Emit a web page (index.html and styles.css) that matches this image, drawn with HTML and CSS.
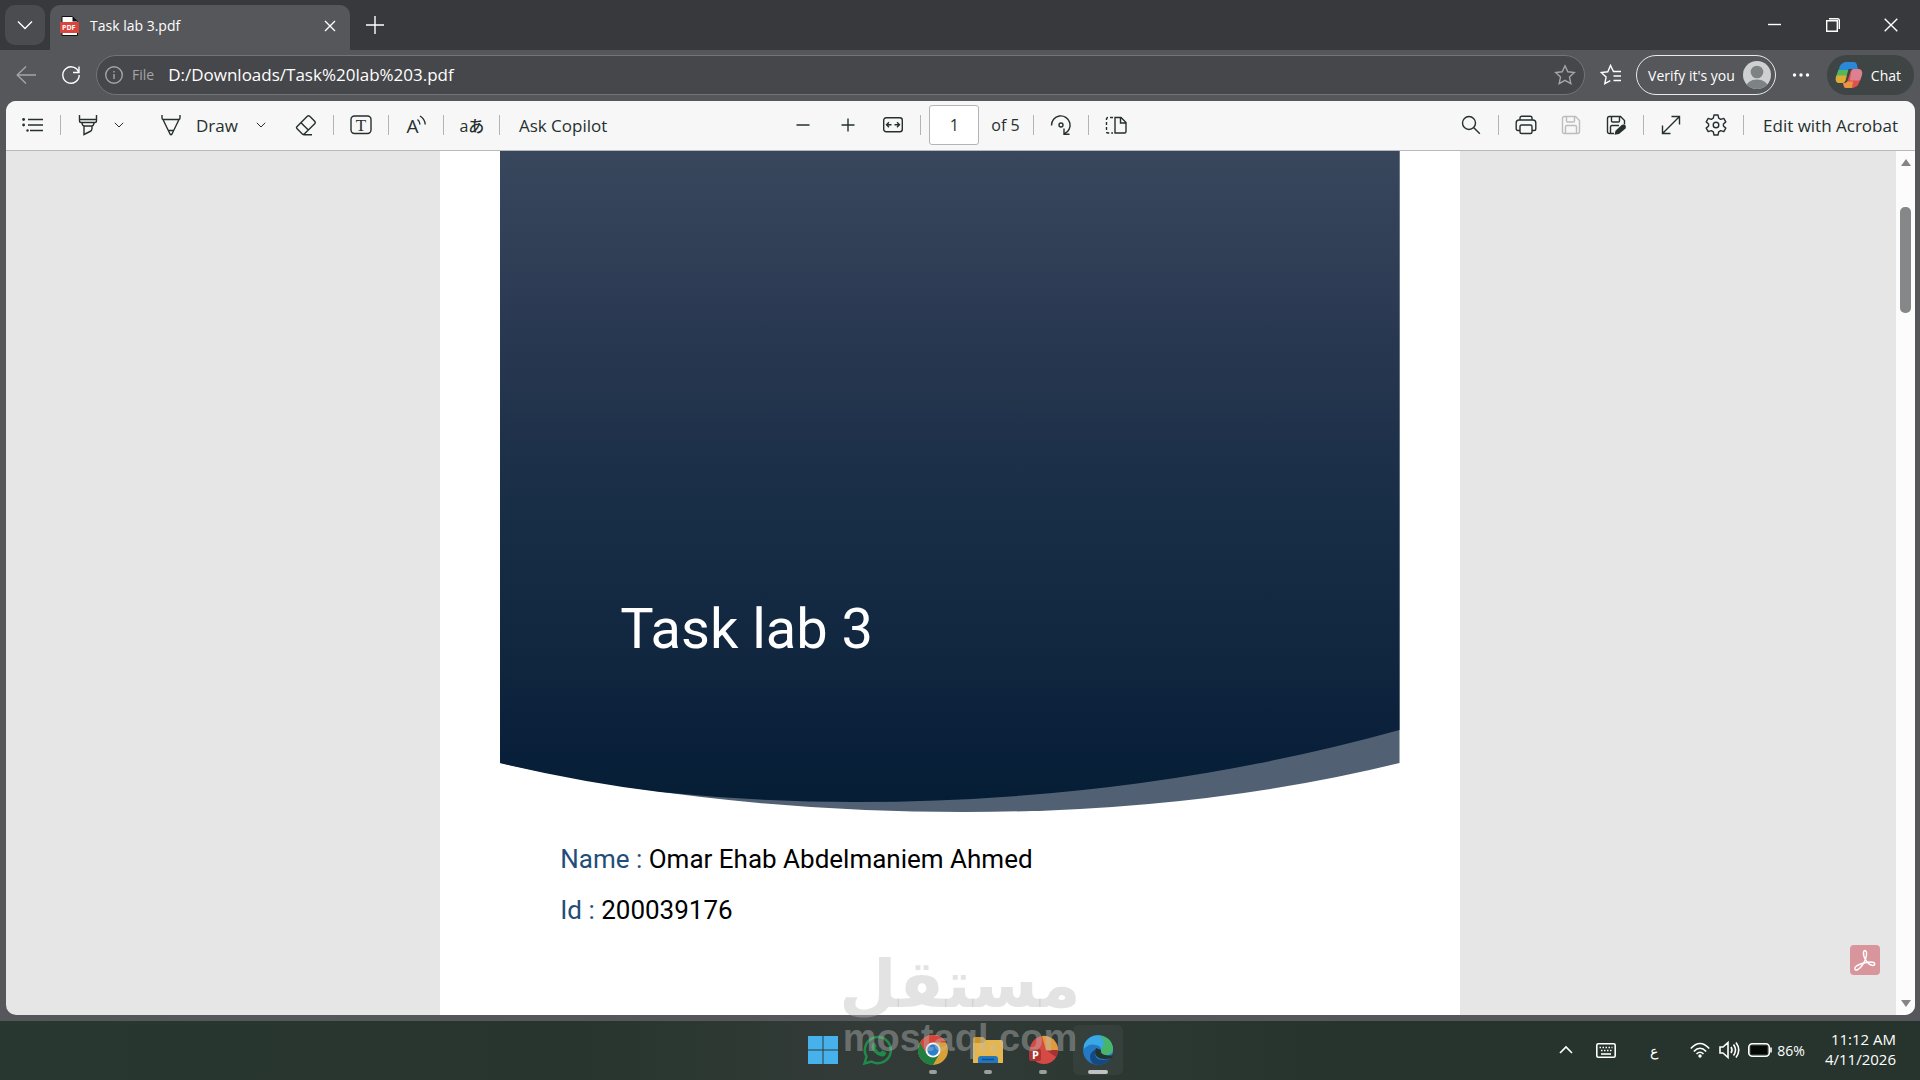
FILE: index.html
```html
<!DOCTYPE html>
<html lang="en">
<head>
    <meta charset="UTF-8">
    <meta name="viewport" content="width=device-width, initial-scale=1.0">
    <title>Task lab 3.pdf</title>
    <link rel="stylesheet" href="styles.css">
</head>
<body>
    <div class="browser">
        <header class="tab-strip">
            <button class="tab-search" aria-label="Search tabs">
                <svg width="16" height="16" viewBox="0 0 16 16"><path d="M1 4.500l7 7 7-7"/></svg>
            </button>
            <div class="tab">
                <svg class="tab-icon" width="20" height="20" viewBox="0 0 20 20">
                    <path d="M2 .5h10.500l5 5v14h-15.500z" fill="#fff" stroke="#111" stroke-width="1"/>
                    <path d="M12.500.5v5h5z" fill="#111" stroke="none"/>
                    <rect x="0" y="6" width="19" height="11" fill="#d9453d" stroke="none"/>
                    <text x="2" y="14" class="pdf-text">PDF</text>
                </svg>
                <span class="tab-title">Task lab 3.pdf</span>
                <button class="tab-close" aria-label="Close tab">
                    <svg width="12" height="12" viewBox="0 0 12 12"><path d="M1 1l10 10M11 1L1 11"/></svg>
                </button>
            </div>
            <button class="new-tab" aria-label="New tab">
                <svg width="20" height="20" viewBox="0 0 20 20"><path d="M10 1v18M1 10h18"/></svg>
            </button>
            <div class="window-controls">
                <button aria-label="Minimize"><svg width="14" height="14" viewBox="0 0 14 14"><path d="M0 6.500h13"/></svg></button>
                <button aria-label="Restore"><svg width="14" height="14" viewBox="0 0 14 14"><path d="M.7 2.700h10.600v10.600H.7zM3 .7h8.500q1.800 0 1.800 1.800V11"/></svg></button>
                <button aria-label="Close"><svg width="14" height="14" viewBox="0 0 14 14"><path d="M.7.7l12.600 12.600M13.300.7L.7 13.300"/></svg></button>
            </div>
        </header>

        <nav class="address-row">
            <button class="nav-btn disabled" aria-label="Back">
                <svg width="20" height="20" viewBox="0 0 20 20"><path d="M10 1.500L1.200 10l8.800 8.500M1.200 10H20"/></svg>
            </button>
            <button class="nav-btn" aria-label="Refresh">
                <svg width="20" height="20" viewBox="0 0 20 20"><path d="M17.800 7.500A8.200 8.200 0 1 0 18.200 10M18 1.500v6h-6"/></svg>
            </button>
            <div class="omnibox">
                <svg class="muted" width="18" height="18" viewBox="0 0 18 18"><circle cx="9" cy="9" r="8.300"/><path d="M9 8v5M9 5v1.500"/></svg>
                <label class="scheme" for="url">File</label>
                <input type="text" id="url" class="url" value="D:/Downloads/Task%20lab%203.pdf">
                <button class="star muted" aria-label="Add to favorites">
                    <svg width="22" height="22" viewBox="0 0 22 22"><path d="M11 1.800l2.800 6 6.500.8-4.800 4.500 1.300 6.500-5.800-3.200-5.800 3.200 1.300-6.500L1.700 8.600l6.500-.8z"/></svg>
                </button>
            </div>
            <button class="nav-btn favorites" aria-label="Favorites">
                <svg width="22" height="22" viewBox="0 0 22 22"><path d="M20 7.500h-6.500L10.500 1.500 7.800 7.800l-6.500.8 4.800 4.500-1.300 6.500 5.500-3M13.500 12H21M13.500 16.500H21M13.500 7.500H21"/></svg>
            </button>
            <button class="profile">
                Verify it's you
                <svg width="28" height="28" viewBox="0 0 28 28">
                    <defs><clipPath id="face"><circle cx="14" cy="14" r="14"/></clipPath></defs>
                    <g clip-path="url(#face)" stroke="none"><rect width="28" height="28" fill="#cfd0d1"/><circle cx="14" cy="11" r="6.300" fill="#7d8284"/><ellipse cx="14" cy="26" rx="11" ry="7.500" fill="#7d8284"/></g>
                </svg>
            </button>
            <button class="nav-btn more" aria-label="Settings and more">
                <svg width="18" height="6" viewBox="0 0 18 6"><g fill="#fff" stroke="none"><circle cx="2.500" cy="3" r="1.700"/><circle cx="9" cy="3" r="1.700"/><circle cx="15.500" cy="3" r="1.700"/></g></svg>
            </button>
            <button class="chat">
                <svg width="28" height="28" viewBox="0 0 28 28">
                    <g stroke="none">
                        <path d="M8 2q1-1 3-1h8q2 0 2.700 2l1.300 5h-6q-2 0-2.600 2L11 20q-.7 2-3 2H4Q0 21 1 16L4.500 6Q5.500 3 8 2z" fill="#2a88d8"/>
                        <path d="M3.500 9L.9 16.500Q0 21.500 4 22h4q2.300 0 3-2l2.800-11z" fill="#55b858"/>
                        <path d="M1.500 14.500L.9 16.500Q0 21.500 4 22h4q2.300 0 3-2l1.600-5.500z" fill="#dfaa36"/>
                        <path d="M20 26q-1 1-3 1h-6q-2 0-2.500-2L8 22q2.500-.3 3-2l3.500-10q.8-2 2.500-2h7q4 1 3 6l-3.500 9q-1 2.500-3.500 3z" fill="#e2504c"/>
                        <path d="M16 12q.6-4 3-4h5q4 1 3 6l-2 5.500H15z" fill="#dc8092"/>
                        <path d="M9 25l-.8-3q2 0 3-1.500h7L17 26.500q-1 .5-2 .5h-4q-1.500 0-2-2z" fill="#e89544"/>
                        <path d="M13.500 8h4.500q-1.700.5-2.300 2.300l-2.900 9q-.6 1.900-2 2.400H8.500q1.400-.5 2-2z" fill="#3f4444"/>
                    </g>
                </svg>
                Chat
            </button>
        </nav>

        <main class="viewer">
            <div class="toolbar">
                <div class="tools">
                    <button class="tool" aria-label="Contents">
                        <svg width="22" height="16" viewBox="0 0 22 16"><path d="M6 2.500h15M6 8h15M8 13.500h13"/><g fill="#25302f" stroke="none"><circle cx="1.600" cy="2.500" r="1.400"/><circle cx="1.600" cy="8" r="1.400"/><circle cx="5.500" cy="13.500" r="1.200"/></g></svg>
                    </button>
                    <span class="sep"></span>
                    <button class="tool" aria-label="Highlight">
                        <svg width="20" height="22" viewBox="0 0 20 22"><path d="M1.500 1v6q0 1.500 1.500 1.500h14q1.500 0 1.500-1.500V1M1.500 5.500h17M4 8.500q0 3 2 3.500v8.500l6-3q2-1 2-3V12q2-.5 2-3.500M6 12h8"/></svg>
                    </button>
                    <button class="drop" aria-label="Highlight colors"><svg width="10" height="6" viewBox="0 0 10 6"><path d="M.8.8L5 5 9.200.8"/></svg></button>
                    <button class="tool pen">
                        <svg width="20" height="22" viewBox="0 0 20 22"><path d="M1 1v3q0 1.500 1.500 1.500h15Q19 5.500 19 4V1M2 5.500L9 20q1 1.500 2 0l7-14.500M7.500 16.500h5"/></svg>
                        Draw
                    </button>
                    <button class="drop" aria-label="Draw options"><svg width="10" height="6" viewBox="0 0 10 6"><path d="M.8.8L5 5 9.200.8"/></svg></button>
                    <button class="tool eraser" aria-label="Erase">
                        <svg width="22" height="22" viewBox="0 0 22 22"><path d="M12.300 2.300q1.200-1.200 2.400 0l5 5q1.200 1.200 0 2.400L9.500 19.800q-1.200 1.200-2.400 0l-5-5q-1.200-1.200 0-2.400zM6 8.700l7.300 7.300M8.500 20.700H17"/></svg>
                    </button>
                    <span class="sep"></span>
                    <button class="tool" aria-label="Add text">
                        <svg width="22" height="20" viewBox="0 0 22 20"><rect x="1" y="1" width="20" height="17.500" rx="3.500"/><text x="11" y="15.500" class="serif-text">T</text></svg>
                    </button>
                    <span class="sep"></span>
                    <button class="tool" aria-label="Read aloud">
                        <svg width="22" height="22" viewBox="0 0 22 22"><text x="7.500" y="18.500" class="read-text">A</text><path d="M12.500 5.500q2.500 1.800 2.500 5M15 2q5 3 5.200 8.500"/></svg>
                    </button>
                    <span class="sep"></span>
                    <button class="tool translate" aria-label="Translate">aあ</button>
                    <span class="sep"></span>
                    <button class="text-btn ask">Ask Copilot</button>
                </div>

                <div class="tools center">
                    <button class="tool" aria-label="Zoom out"><svg width="14" height="14" viewBox="0 0 14 14"><path d="M.5 7h13"/></svg></button>
                    <button class="tool far" aria-label="Zoom in"><svg width="14" height="14" viewBox="0 0 14 14"><path d="M.5 7h13M7 .5v13"/></svg></button>
                    <button class="tool far" aria-label="Fit to width">
                        <svg width="20" height="16" viewBox="0 0 20 16"><rect x=".7" y=".7" width="18.600" height="14" rx="2.500"/><path d="M3.500 7.700h5M6 5.200L3.500 7.700 6 10.200M16.500 7.700h-5M14 5.200l2.500 2.500-2.500 2.500"/></svg>
                    </button>
                    <span class="sep"></span>
                    <input type="text" id="page-number" class="page-number" value="1">
                    <label for="page-number" class="page-count">of 5</label>
                    <span class="sep"></span>
                    <button class="tool" aria-label="Rotate">
                        <svg width="22" height="22" viewBox="0 0 22 22"><path d="M1.500 11.500a9.300 9.300 0 1 1 13 8.200M14 14.500v5.700h5.500"/><circle cx="11" cy="11" r="2"/></svg>
                    </button>
                    <span class="sep"></span>
                    <button class="tool" aria-label="Page view">
                        <svg width="22" height="18" viewBox="0 0 22 18"><path d="M10 1.500h6l5 5v9q0 1.500-1.500 1.500H10zM15.500 1.500V7H21"/><path d="M8 1.500H3Q1.500 1.500 1.500 3v12.500Q1.500 17 3 17h5" stroke-dasharray="3 2"/></svg>
                    </button>
                </div>

                <div class="tools right">
                    <button class="tool" aria-label="Find"><svg width="20" height="20" viewBox="0 0 20 20"><circle cx="8" cy="8" r="6.500"/><path d="M12.800 12.800l6 6"/></svg></button>
                    <span class="sep"></span>
                    <button class="tool" aria-label="Print">
                        <svg width="22" height="20" viewBox="0 0 22 20"><path d="M5 5V3q0-1.800 1.800-1.800h8.400Q17 1.200 17 3v2M5 15.500H3q-1.800 0-1.800-1.800V8Q1.200 5 4 5h14q2.800 0 2.800 3v5.700q0 1.800-1.800 1.800h-2"/><rect x="5" y="10" width="12" height="8.500" rx="1.500"/></svg>
                    </button>
                    <button class="tool far pale" aria-label="Save" disabled>
                        <svg width="20" height="20" viewBox="0 0 20 20"><path d="M3.500 1.500h11l4 4v11q0 2-2 2h-13q-2 0-2-2v-13q0-2 2-2zM5.500 1.500V6q0 1 1 1h6q1 0 1-1V1.500M4.500 18.500V12q0-1.500 1.500-1.500h8q1.500 0 1.500 1.500v6.500"/></svg>
                    </button>
                    <button class="tool far" aria-label="Save as">
                        <svg width="20" height="20" viewBox="0 0 20 20"><path d="M8 18.500H3.500q-2 0-2-2v-13q0-2 2-2h11l4 4v4M5.500 1.500V6q0 1 1 1h6q1 0 1-1V1.500M4.500 18.500V12q0-1.500 1.500-1.500h7"/><path d="M8.500 19.800l1-4 6.500-6q2-1 3.300.4t.2 3.200L13 19z" fill="#25302f" stroke="none"/></svg>
                    </button>
                    <span class="sep"></span>
                    <button class="tool" aria-label="Full screen"><svg width="20" height="20" viewBox="0 0 20 20"><path d="M1.500 18.500l17-17M10.500 1.500h8v8M1.500 10.500v8h8"/></svg></button>
                    <button class="tool far" aria-label="Settings">
                        <svg width="22" height="22" viewBox="0 0 22 22"><path d="M9 1h4l.7 3.200 2 1.200 3.100-1 2 3.500-2.400 2.100v2l2.400 2.100-2 3.500-3.100-1-2 1.200L13 21H9l-.7-3.200-2-1.200-3.100 1-2-3.500L3.600 12v-2L1.200 7.900l2-3.500 3.100 1 2-1.200z" stroke-linejoin="round"/><circle cx="11" cy="11" r="2.800"/></svg>
                    </button>
                    <span class="sep"></span>
                    <button class="text-btn">Edit with Acrobat</button>
                </div>
            </div>

            <div class="document">
                <div class="pages">
                    <article class="page">
                        <section class="cover">
                            <svg class="cover-art" viewBox="0 0 900 662" preserveAspectRatio="none">
                                <defs>
                                    <linearGradient id="navy" x1="0" y1="0" x2="0" y2="1">
                                        <stop offset="0" stop-color="#39475d"/>
                                        <stop offset=".3" stop-color="#283750"/>
                                        <stop offset=".55" stop-color="#182d46"/>
                                        <stop offset=".8" stop-color="#10253e"/>
                                        <stop offset=".9" stop-color="#0a203b"/>
                                        <stop offset="1" stop-color="#051e35"/>
                                    </linearGradient>
                                </defs>
                                <path d="M0 0H900V612Q700 661 465 661Q220 661 0 612z" fill="#516173"/>
                                <path d="M0 0H900V579Q640 651 355 651Q260 651 160 641Q80 631 0 612z" fill="url(#navy)"/>
                            </svg>
                            <h1>Task lab 3</h1>
                        </section>
                        <p><span class="field">Name :</span> Omar Ehab Abdelmaniem Ahmed</p>
                        <p><span class="field">Id :</span> 200039176</p>
                    </article>
                    <button class="acrobat" aria-label="Open in Acrobat">
                        <svg width="22" height="22" viewBox="0 0 22 22"><path d="M11 1.500q3 1 .5 8.500Q9 17 4 20.500 1 22 .8 19.500.8 17 8 14.500t12-1q2 2.500-1 3-4-.5-7-5T9.500 3Q10 1.500 11 1.500z"/></svg>
                    </button>
                </div>
                <div class="scrollbar">
                    <span class="arrow up"></span>
                    <span class="thumb"></span>
                    <span class="arrow down"></span>
                </div>
            </div>
        </main>
    </div>

    <footer class="taskbar">
        <div></div>
        <div class="apps">
            <button class="app" aria-label="Start">
                <svg width="30" height="30" viewBox="0 0 30 30"><g fill="#46b1ea"><path d="M0 1h14.500v13.500H0zM15.500 1H30v13.500H15.500zM0 15.500h14.500V29H0zM15.500 15.500H30V29H15.500z"/></g></svg>
            </button>
            <button class="app" aria-label="WhatsApp">
                <svg width="30" height="30" viewBox="0 0 30 30"><path d="M1.500 28.500l2-7A13 13 0 1 1 8.500 26.500z" fill="none" stroke="#208a4a" stroke-width="2.500"/><path d="M10 8q1-1 2 0l1.500 3q.3 1-.8 2 1.500 3 4.500 4.500l1.500-1.800q.6-.5 1.300 0l2.800 1.500q.8.600 0 2-1.500 2.800-5 2-7-2-9.300-8.700Q8 9.500 10 8z" fill="#208a4a"/></svg>
            </button>
            <button class="app running" aria-label="Chrome">
                <svg width="30" height="30" viewBox="0 0 30 30"><circle cx="15" cy="15" r="15" fill="#d9a035"/><path d="M2 7.500A15 15 0 0 1 28 7.500H15L8.500 19z" fill="#d6443c"/><path d="M2 7.500A15 15 0 0 0 15 30l6.500-11.200H8.500z" fill="#1f7e40"/><circle cx="15" cy="15" r="7.500" fill="#fff"/><circle cx="15" cy="15" r="5.700" fill="#2b7fcb"/></svg>
            </button>
            <button class="app running" aria-label="File Explorer">
                <svg width="30" height="30" viewBox="0 0 30 30"><path d="M0 4q0-2 2-2h8l3 3v6H0z" fill="#c9962e"/><path d="M0 8l10 0 3-3h15q2 0 2 2v21H0z" fill="#e5b64f"/><path d="M5 28v-4q0-3 3-3h14q3 0 3 3v4z" fill="#2277bf"/><path d="M9 24.500h12" stroke="#134f8c" stroke-width="1.500"/></svg>
            </button>
            <button class="app running" aria-label="PowerPoint">
                <svg width="30" height="30" viewBox="0 0 30 30"><circle cx="16" cy="15" r="14" fill="#d64a45"/><path d="M14 1a14 14 0 0 1 16 14H18z" fill="#e09a3c"/><path d="M18 15h12a14 14 0 0 1-2 7z" fill="#a63231"/><rect x="1" y="14" width="12" height="12" rx="2" fill="#a83532"/><text x="4" y="24" class="app-text">P</text></svg>
            </button>
            <button class="app running active" aria-label="Microsoft Edge">
                <svg width="30" height="30" viewBox="0 0 30 30"><circle cx="15" cy="15" r="15" fill="#2379c4"/><path d="M1 10A15 15 0 0 1 30 14q0 6-7 6-6 0-5-4 1-5-5-6Q6 8 1 14z" fill="#39a8e4"/><path d="M17 1q12 1 13 13 0 6-7 6-6 0-5-4 2-6 3-9z" fill="#47b56c"/><path d="M12 16q-1 9 8 9 4 0 8-2-5 7-13 7-8-1-8-8 0-5 6-8z" fill="#144a80"/><path d="M13 13q-3 7 3 10 5 2 13 0l1-3q-3 1-8 0-5-1-4-5z" fill="#26322e"/></svg>
            </button>
        </div>
        <div class="tray">
            <button aria-label="Show hidden icons"><svg width="14" height="8" viewBox="0 0 14 8"><path d="M1 7l6-6 6 6"/></svg></button>
            <button class="keyboard" aria-label="Touch keyboard">
                <svg width="20" height="15" viewBox="0 0 20 15"><rect x=".8" y=".8" width="18.400" height="13.400" rx="1.500"/><path d="M3.500 4.500h13M5 7.500h11" stroke-dasharray="1.500 1.500"/><path d="M5 11h10"/></svg>
            </button>
            <button class="lang" lang="ar">ع</button>
            <button class="status">
                <svg width="20" height="16" viewBox="0 0 20 16"><path d="M.8 6.500q9.200-10 18.400 0M3.800 9.500q6.200-6.500 12.400 0M6.500 12q3.500-3.500 7 0"/><circle cx="10" cy="14" r="1.700" fill="#fff" stroke="none"/></svg>
                <svg width="20" height="18" viewBox="0 0 20 18"><path d="M1 6h3l5-4.500v15L4 12H1zM12 6q2 3 0 6M14.500 3.500q4 5.500 0 11M17 1.500q5.500 7.500 0 15"/></svg>
                <svg width="24" height="14" viewBox="0 0 24 14"><rect x=".8" y=".8" width="20.500" height="12.400" rx="3.500"/><path d="M23 4.500v5"/><rect x="3" y="3" width="16" height="8" fill="#050807" stroke="none"/></svg>
                <span>86%</span>
            </button>
            <button class="clock">11:12 AM<br>4/11/2026</button>
        </div>
    </footer>

    <div class="watermark">
        <span class="brand" lang="ar">مستقل</span>
        <span class="domain">mostaql.com</span>
    </div>
</body>
</html>
```
FILE: styles.css
```css
* {
    box-sizing: border-box;
}

body {
    margin: 0;
    height: 100vh;
    display: flex;
    flex-direction: column;
    overflow: hidden;
    font-family: "Open Sans", "Noto Sans", sans-serif;
    font-size: 14px;
    background: #56575b;
    color: #fff;
}

button, input {
    font: inherit;
    color: inherit;
    background: none;
    border: none;
    padding: 0;
    margin: 0;
}

button {
    display: flex;
    align-items: center;
    justify-content: center;
    flex: none;
    white-space: nowrap;
}

svg {
    display: block;
    flex: none;
    overflow: visible;
    fill: none;
    stroke: currentColor;
    stroke-width: 1.4;
}

svg text {
    stroke: none;
}

.browser {
    flex: 1;
    min-height: 0;
    display: flex;
    flex-direction: column;
}

/* tabs */
.tab-strip {
    height: 50px;
    flex: none;
    display: flex;
    align-items: center;
    padding-left: 5px;
    background: #38393c;
}

.tab-search {
    width: 40px;
    height: 40px;
    border-radius: 10px;
    background: #4b4c4f;
}

.tab {
    width: 300px;
    height: 45px;
    margin: 5px 0 0 5px;
    padding: 0 14px 4px 10px;
    display: flex;
    align-items: center;
    border-radius: 10px 10px 0 0;
    background: #56575b;
}

.tab-title {
    flex: 1;
    margin-left: 10px;
}

.pdf-text {
    font: bold 7px "Open Sans", sans-serif;
    fill: #fff;
}

.new-tab {
    width: 50px;
    height: 40px;
}

.window-controls {
    display: flex;
    margin-left: auto;
}

.window-controls button {
    width: 58px;
    height: 50px;
}

/* address row */
.address-row {
    height: 50px;
    flex: none;
    display: flex;
    align-items: center;
    padding: 0 6px;
}

.nav-btn {
    width: 40px;
    height: 40px;
    margin-right: 5px;
}

.disabled, .muted, .scheme {
    color: #a4a5a8;
}

.omnibox {
    flex: 1;
    height: 40px;
    display: flex;
    align-items: center;
    padding: 0 8px;
    border: 1px solid #737477;
    border-radius: 20px;
    background: #46474a;
}

.scheme {
    margin: 0 14px 0 9px;
    padding-bottom: 2px;
}

.url {
    flex: 1;
    padding-bottom: 2px;
    font-size: 17px;
    outline: none;
}

.favorites {
    margin: 0 5px 0 6px;
}

.profile {
    height: 40px;
    padding: 0 4px 0 11px;
    gap: 8px;
    border: 1px solid #e8e9ea;
    border-radius: 20px;
}

.more {
    margin: 0 6px 0 5px;
}

.chat {
    height: 40px;
    padding: 0 13px 0 8px;
    gap: 8px;
    border-radius: 20px;
    background: #3f4444;
}

/* pdf viewer */
.viewer {
    flex: 1;
    min-height: 0;
    display: flex;
    flex-direction: column;
    margin: 1px 5px 6px 6px;
    overflow: hidden;
    border-radius: 10px;
    background: #e6e6e6;
    color: #25302f;
}

.toolbar {
    height: 50px;
    flex: none;
    display: grid;
    grid-template-columns: 1fr auto 1fr;
    align-items: center;
    padding: 0 17px 1px 13px;
    border-bottom: 1px solid #b9b9b9;
    background: #f7f7f7;
    font-size: 17px;
}

.tools {
    display: flex;
    align-items: center;
}

.center {
    padding-left: 2px;
}

.right {
    justify-content: flex-end;
}

.tool {
    min-width: 28px;
    height: 40px;
}

.far {
    margin-left: 17px;
}

.pale {
    color: #bdbdbd;
}

.sep {
    width: 1px;
    height: 20px;
    margin: 0 13px;
    background: #b4b4b4;
}

.drop {
    width: 16px;
    height: 40px;
    margin-left: 9px;
}

.drop svg {
    stroke-width: 1;
}

.pen {
    margin: 0 6px 0 34px;
    gap: 15px;
}

.eraser {
    margin-left: 23px;
}

.translate {
    width: 28px;
    margin-left: 1px;
    font-family: "Open Sans", "Noto Sans CJK JP", sans-serif;
    font-size: 16px;
    font-weight: 500;
}

.serif-text {
    font: 17px "Liberation Serif", serif;
    fill: #25302f;
    text-anchor: middle;
}

.read-text {
    font: 19px "Open Sans", sans-serif;
    fill: #25302f;
    text-anchor: middle;
}

.text-btn {
    margin-left: 6px;
    height: 40px;
}

.page-number {
    width: 50px;
    height: 40px;
    margin-left: -5px;
    border: 1px solid #b4b4b4;
    border-radius: 3px;
    background: #fff;
    text-align: center;
    font-size: 16px;
}

.page-count {
    margin-left: 12px;
    font-size: 16px;
}

.document {
    flex: 1;
    min-height: 0;
    display: flex;
}

.pages {
    flex: 1;
    position: relative;
    overflow: hidden;
    padding-right: 2px;
}

.page {
    width: 54%;
    height: 100%;
    margin: 0 auto;
    padding: 0 60px;
    background: #fff;
    color: #000;
    font-family: Roboto, sans-serif;
}

.cover {
    position: relative;
    padding: 443px 120px 149px;
    color: #fff;
}

.cover-art {
    position: absolute;
    inset: 0;
    width: 100%;
    height: 100%;
    stroke: none;
}

.cover h1 {
    position: relative;
    margin: 0;
    font-size: 56px;
    font-weight: 400;
    line-height: 70px;
}

.page p {
    margin: 0;
    padding: 30px 60px 0;
    font-size: 26px;
    line-height: 32px;
}

.page p + p {
    padding-top: 19px;
}

.field {
    color: #1f4e79;
}

.acrobat {
    position: absolute;
    right: 16px;
    bottom: 40px;
    width: 30px;
    height: 30px;
    border-radius: 4px;
    background: #d9959c;
    color: #fff;
}

.scrollbar {
    width: 19px;
    display: flex;
    flex-direction: column;
    align-items: center;
    padding: 8px 0;
    background: #fcfcfc;
}

.arrow {
    border: 5px solid transparent;
}

.up {
    border-top: none;
    border-bottom: 7px solid #858585;
}

.down {
    margin-top: auto;
    border-bottom: none;
    border-top: 7px solid #858585;
}

.thumb {
    width: 11px;
    height: 106px;
    margin-top: 41px;
    border-radius: 5px;
    background: #858789;
}

/* taskbar */
.taskbar {
    height: 59px;
    flex: none;
    display: grid;
    grid-template-columns: 1fr auto 1fr;
    align-items: center;
    padding-bottom: 1px;
    background: linear-gradient(90deg, #28372f, #27352e 30%, #333b38 45%, #26342d 70%, #26342d);
}

.apps {
    display: flex;
    gap: 5px;
}

.app {
    position: relative;
    width: 50px;
    height: 50px;
    border-radius: 6px;
}

.app svg {
    stroke: none;
}

.app-text {
    font: bold 11px "Open Sans", sans-serif;
    fill: #fff;
}

.running::after {
    content: "";
    position: absolute;
    bottom: 1px;
    left: 50%;
    width: 8px;
    height: 4px;
    border-radius: 2px;
    background: #9b9fa0;
    transform: translateX(-50%);
}

.active {
    background: #35403c;
}

.active::after {
    width: 20px;
    background: #bfc2c3;
}

.tray {
    display: flex;
    align-items: center;
    justify-content: flex-end;
    padding-right: 24px;
}

.keyboard {
    margin-left: 23px;
}

.tray svg {
    stroke-width: 1.6;
}

.lang {
    width: 16px;
    margin: 0 28px 0 30px;
}

.status {
    gap: 9px;
}

.status span {
    margin-left: -4px;
}

.clock {
    margin-left: 20px;
    padding-bottom: 2px;
    font-size: 15px;
    line-height: 20px;
    text-align: right;
}

.watermark {
    position: absolute;
    left: 50%;
    bottom: 22px;
    display: flex;
    flex-direction: column;
    align-items: center;
    transform: translateX(-50%);
    pointer-events: none;
    font-weight: bold;
    color: rgba(189, 189, 189, .42);
}

.brand {
    font-family: "DejaVu Sans", sans-serif;
    font-size: 66px;
    line-height: 66px;
}

.domain {
    font-family: "Liberation Sans", Arial, sans-serif;
    font-size: 38px;
    line-height: 40px;
}
```
